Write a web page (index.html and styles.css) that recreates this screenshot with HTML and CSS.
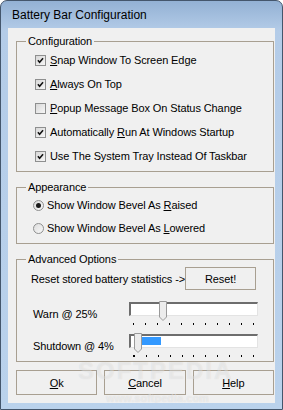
FILE: index.html
```html
<!DOCTYPE html>
<html lang="en">
<head>
    <meta charset="UTF-8">
    <meta name="viewport" content="width=device-width, initial-scale=1.0">
    <title>Battery Bar Configuration</title>
    <link rel="stylesheet" href="styles.css">
</head>
<body>
    <div class="window">
        <div class="titlebar">Battery Bar Configuration</div>
        <div class="client">
            <fieldset class="group group-config">
                <legend>Configuration</legend>
                <div class="option"><span class="check on"><svg viewBox="0 0 11 11"><polyline points="2.3,5.2 4.4,7.6 8.6,2.8"/></svg></span><span><u>S</u>nap Window To Screen Edge</span></div>
                <div class="option"><span class="check on"><svg viewBox="0 0 11 11"><polyline points="2.3,5.2 4.4,7.6 8.6,2.8"/></svg></span><span><u>A</u>lways On Top</span></div>
                <div class="option"><span class="check"></span><span><u>P</u>opup Message Box On Status Change</span></div>
                <div class="option"><span class="check on"><svg viewBox="0 0 11 11"><polyline points="2.3,5.2 4.4,7.6 8.6,2.8"/></svg></span><span>Automatically <u>R</u>un At Windows Startup</span></div>
                <div class="option"><span class="check on"><svg viewBox="0 0 11 11"><polyline points="2.3,5.2 4.4,7.6 8.6,2.8"/></svg></span><span>Use The System Tray Instead Of Taskbar</span></div>
            </fieldset>

            <fieldset class="group group-appearance">
                <legend>Appearance</legend>
                <div class="option"><span class="radio on"></span><span>Show Window Bevel As <u>R</u>aised</span></div>
                <div class="option"><span class="radio"></span><span>Show Window Bevel As <u>L</u>owered</span></div>
            </fieldset>

            <fieldset class="group group-advanced">
                <legend>Advanced Options</legend>
                <div class="reset-row">
                    <span class="reset-text">Reset stored battery statistics -&gt;</span>
                    <button class="btn btn-reset">Reset!</button>
                </div>
                <div class="slider-row">
                    <span class="slider-label">Warn @ 25%</span>
                    <div class="slider">
                        <div class="track"></div>
                        <svg class="thumb" style="left: 30px" viewBox="0 0 8 20"><polygon points="0.5,0.5 7.5,0.5 7.5,16 4,19.5 0.5,16"/></svg>
                        <div class="ticks">
                            <i></i><i></i><i></i><i></i><i></i><i></i><i></i><i></i><i></i><i></i><i></i>
                        </div>
                    </div>
                </div>
                <div class="slider-row">
                    <span class="slider-label">Shutdown @ 4%</span>
                    <div class="slider">
                        <div class="track"><div class="fill" style="left: 11px; width: 19px"></div></div>
                        <svg class="thumb" style="left: 5px" viewBox="0 0 8 20"><polygon points="0.5,0.5 7.5,0.5 7.5,16 4,19.5 0.5,16"/></svg>
                        <div class="ticks">
                            <i class="big"></i><i></i><i></i><i></i><i></i><i></i><i></i><i></i><i></i><i></i><i></i>
                        </div>
                    </div>
                </div>
            </fieldset>

            <div class="buttons">
                <button class="btn"><u>O</u>k</button>
                <button class="btn"><u>C</u>ancel</button>
                <button class="btn"><u>H</u>elp</button>
            </div>

            <div class="watermark">SOFTPEDIA<span>www.softpedia.com</span></div>
        </div>
    </div>
</body>
</html>
```

FILE: styles.css
```css
body {
    margin: 0;
    background: #fff;
    font-family: "Liberation Sans", Arial, sans-serif;
    font-size: 11px;
    letter-spacing: -0.1px;
    color: #000;
}

.window {
    width: 283px;
    height: 410px;
    box-sizing: border-box;
    border: 1px solid #44566c;
    border-radius: 7px 7px 0 0;
    background: linear-gradient(#93b1d4, #b4cce8 30px, #bad2ec);
    padding: 0 7px 6px 7px;
}

.titlebar {
    height: 27px;
    box-sizing: border-box;
    padding: 4px 0 0 4px;
    line-height: 20px;
    font-size: 12px;
    letter-spacing: 0;
    color: #000;
}

.client {
    position: relative;
    height: 375px;
    box-sizing: border-box;
    background: #f0f0f0;
    padding: 7px 2px 0 8px;
    overflow: hidden;
}

.group {
    margin: 0;
    padding: 0 0 3px 0;
    width: 258px;
    box-sizing: border-box;
    border: 1px solid #a89f91;
}

.group legend {
    margin-left: 9px;
    padding: 0 2px;
    line-height: 13px;
}

.group-appearance,
.group-advanced {
    margin-top: 9px;
}

.option {
    display: flex;
    align-items: center;
    height: 24px;
    gap: 4px;
    padding-left: 18px;
}

.group-appearance .option {
    padding-left: 16px;
    gap: 3px;
    margin-top: -1px;
}

.check {
    width: 11px;
    height: 11px;
    box-sizing: border-box;
    border: 1px solid #8e8f8f;
    background: linear-gradient(135deg, #d8d8d8, #f6f6f6);
    display: flex;
}

.check svg {
    width: 9px;
    height: 9px;
    fill: none;
    stroke: #111;
    stroke-width: 1.9;
}

.radio {
    width: 11px;
    height: 11px;
    box-sizing: border-box;
    border: 1px solid #8e8f8f;
    border-radius: 50%;
    background: linear-gradient(135deg, #dcdcdc, #f8f8f8);
    display: flex;
    align-items: center;
    justify-content: center;
}

.radio.on::after {
    content: "";
    width: 5px;
    height: 5px;
    border-radius: 50%;
    background: #1a1a1a;
}

.reset-row {
    display: flex;
    align-items: center;
    justify-content: space-between;
    padding: 1px 17px 0 14px;
}

.reset-text {
    white-space: nowrap;
}

.btn {
    font-family: "Liberation Sans", Arial, sans-serif;
    font-size: 11px;
    letter-spacing: -0.1px;
    color: #000;
    background: #f0f0f0;
    border: 1px solid #a89f91;
    padding: 0;
    margin: 0;
}

.btn-reset {
    width: 71px;
    height: 23px;
    flex-shrink: 0;
}

.slider-row {
    display: flex;
    align-items: center;
    padding-left: 16px;
    margin-top: 11px;
}

.slider-row + .slider-row {
    margin-top: 7px;
}

.slider-label {
    width: 96px;
    white-space: nowrap;
}

.slider {
    position: relative;
    width: 129px;
    height: 25px;
}

.track {
    position: relative;
    margin-top: 1px;
    height: 14px;
    box-sizing: border-box;
    background: #fff;
    border-top: 2px solid #6d6d6d;
    border-left: 2px solid #6d6d6d;
    border-bottom: 1px solid #e3e3e3;
    border-right: 1px solid #e3e3e3;
}

.fill {
    position: absolute;
    top: 1px;
    height: 8px;
    background: #3399ff;
}

.thumb {
    position: absolute;
    top: 0;
    width: 8px;
    height: 20px;
    fill: #ececec;
    stroke: #9a9a9a;
    stroke-width: 1;
}

.ticks {
    display: flex;
    justify-content: space-between;
    padding: 0 4px;
    margin-top: 7px;
}

.ticks i {
    display: block;
    width: 1px;
    height: 2px;
    background: #000;
}

.ticks i.big {
    width: 2px;
}

.buttons {
    display: flex;
    gap: 7px;
    width: 258px;
    margin-top: 8px;
}

.buttons .btn {
    flex: 1;
    height: 25px;
}

.watermark {
    position: absolute;
    left: 70px;
    top: 331px;
    font-size: 24px;
    line-height: 24px;
    font-weight: bold;
    letter-spacing: 2px;
    color: rgba(255, 255, 255, 0.4);
    text-shadow: 0 0 1px rgba(0, 0, 0, 0.1);
    pointer-events: none;
}

.watermark span {
    display: block;
    font-size: 11px;
    line-height: 14px;
    letter-spacing: 0;
    margin: 8px 0 0 28px;
}
```
